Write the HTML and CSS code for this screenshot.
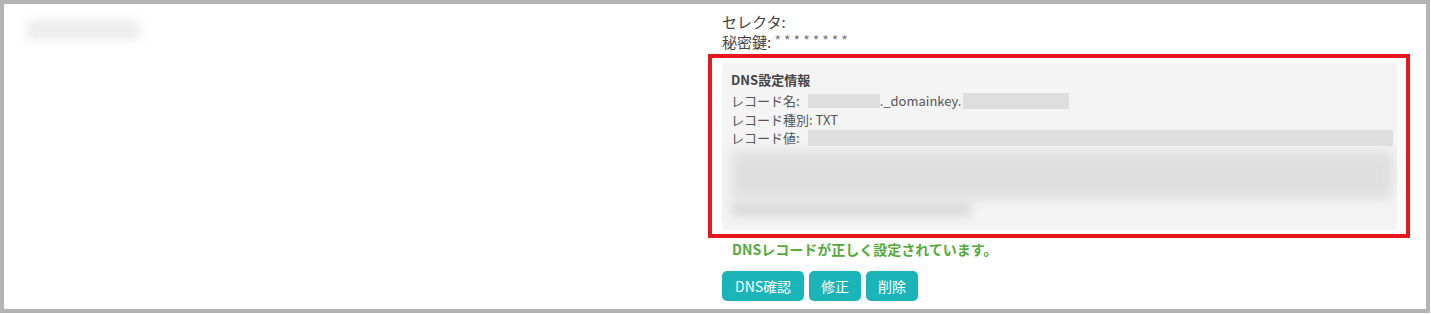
FILE: index.html
```html
<!DOCTYPE html>
<html lang="ja">
<head>
<meta charset="utf-8">
<link rel="stylesheet" href="styles.css">
</head>
<body>
<div class="frame">
  <div class="left">
    <div class="name-blur"></div>
  </div>
  <div class="right">
    <div class="meta">
      <div class="selector">セレクタ:</div>
      <div class="secret">秘密鍵: <span class="stars">********</span></div>
    </div>
    <div class="highlight">
      <div class="dns-box">
        <div class="dns-title">DNS設定情報</div>
        <div class="row">レコード名:<span class="mask mask-a"></span>._domainkey.<span class="mask mask-b"></span></div>
        <div class="row">レコード種別: TXT</div>
        <div class="row row-value">レコード値:<span class="mask mask-c"></span></div>
        <div class="value-blur">
          <div class="bl bl-main"></div>
          <div class="bl bl-short"></div>
        </div>
      </div>
    </div>
    <div class="status">DNSレコードが正しく設定されています。</div>
    <div class="actions">
      <button class="btn btn-wide">DNS確認</button>
      <button class="btn">修正</button>
      <button class="btn">削除</button>
    </div>
  </div>
</div>
</body>
</html>
```

FILE: styles.css
```css
html, body {
  margin: 0;
  padding: 0;
  background: #ffffff;
}

body {
  font-family: "Noto Sans CJK JP", "Noto Sans", sans-serif;
  color: #444;
}

.frame {
  box-sizing: border-box;
  width: 1430px;
  height: 313px;
  border: 4px solid #b4b4b4;
  display: flex;
  overflow: hidden;
}

.left {
  flex: 1;
  padding: 16px 0 0 22px;
}

.name-blur {
  width: 114px;
  height: 20px;
  background: #ededed;
  filter: blur(5px);
}

.right {
  width: 675px;
  margin-right: 29px;
  padding-top: 8px;
}

.meta {
  font-size: 15px;
  line-height: 19px;
  color: #444;
}

.stars {
  color: #777;
  font-size: 14px;
  letter-spacing: 3px;
  vertical-align: 2px;
}

.highlight {
  margin: 3px -13px 0 -14px;
  border: 4px solid #e8161d;
  padding: 5px 9px 4px 10px;
}

.dns-box {
  background: #f4f4f4;
  border-radius: 4px;
  padding: 8px 4px 10px 9px;
  font-size: 13px;
  color: #555;
}

.dns-title {
  font-weight: bold;
  line-height: 17px;
  margin-bottom: 4px;
  color: #444;
}

.row {
  line-height: 18.5px;
  display: flex;
  align-items: center;
  white-space: nowrap;
}

.mask {
  display: inline-block;
  background: #dedede;
}

.mask-a {
  width: 72px;
  height: 14px;
  margin-left: 8px;
}

.mask-b {
  width: 106px;
  height: 16px;
  margin-left: 2px;
}

.mask-c {
  flex: 1;
  height: 16px;
  margin-left: 8px;
}

.value-blur {
  height: 72px;
  padding-top: 3px;
  box-sizing: border-box;
}

.bl {
  background: #dfdfdf;
  filter: blur(6px);
}

.bl-main {
  height: 48px;
}

.bl-short {
  width: 240px;
  height: 16px;
  margin-top: 2px;
  background: #dcdcdc;
  filter: blur(5px);
}

.status {
  margin: 1px 0 0 10px;
  font-size: 14px;
  line-height: 20px;
  font-weight: bold;
  color: #55aa3c;
}

.actions {
  margin-top: 12px;
  display: flex;
  gap: 5px;
}

.btn {
  height: 30px;
  padding: 0 12px;
  border: 0;
  border-radius: 5px;
  background: #1bb5b9;
  color: #ffffff;
  font-family: "Noto Sans CJK JP", "Noto Sans", sans-serif;
  font-size: 14px;
  line-height: 30px;
}

.btn-wide {
  padding: 0 13px;
}
```
